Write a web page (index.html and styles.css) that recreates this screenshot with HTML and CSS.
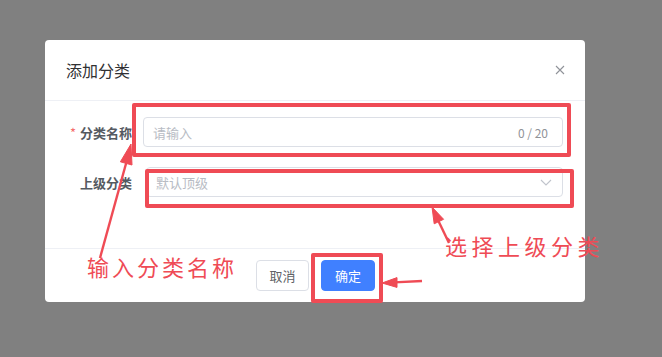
FILE: index.html
```html
<!DOCTYPE html>
<html lang="zh-CN">
<head>
    <meta charset="UTF-8">
    <title>添加分类</title>
    <link rel="stylesheet" href="styles.css">
</head>
<body>
    <div class="dialog">
        <div class="dialog-header">
            <span class="dialog-title">添加分类</span>
            <svg class="dialog-close" width="10" height="10" viewBox="0 0 10 10">
                <path d="M1 1L9 9M9 1L1 9" stroke="#909399" stroke-width="1.1" fill="none"/>
            </svg>
        </div>
        <div class="dialog-body">
            <div class="form-item">
                <label class="form-label"><span class="required">*</span>分类名称</label>
                <div class="input">
                    <span class="placeholder">请输入</span>
                    <span class="count">0 / 20</span>
                </div>
            </div>
            <div class="form-item">
                <label class="form-label">上级分类</label>
                <div class="input select">
                    <span class="placeholder">默认顶级</span>
                    <svg width="12" height="7" viewBox="0 0 12 7">
                        <path d="M1 1L6 6L11 1" stroke="#c0c4cc" stroke-width="1.1" fill="none"/>
                    </svg>
                </div>
            </div>
        </div>
        <div class="dialog-footer">
            <button class="btn">取消</button>
            <button class="btn btn-primary">确定</button>
        </div>
    </div>

    <!-- annotations drawn over the screenshot -->
    <div class="mark mark-name"></div>
    <div class="mark mark-parent"></div>
    <div class="mark mark-ok"></div>
    <div class="note note-name">输入分类名称</div>
    <div class="note note-parent">选择上级分类</div>
    <svg class="arrows" width="662" height="357" viewBox="0 0 662 357">
        <g fill="#ef4b55" stroke="#ef4b55">
            <line x1="100" y1="258" x2="127" y2="160" stroke-width="2.4"/>
            <polygon points="131,144 132,165 120.4,161.8" stroke-width="1"/>
            <line x1="449" y1="243" x2="437" y2="218" stroke-width="2.4"/>
            <polygon points="432,207 443.6,219.3 434.2,223.8" stroke-width="1"/>
            <line x1="422" y1="281" x2="394" y2="282.4" stroke-width="2.4"/>
            <polygon points="382,283 397,277.6 397,287.4" stroke-width="1"/>
        </g>
    </svg>
</body>
</html>
```

FILE: styles.css
```css
body {
    margin: 0;
    padding: 40px 0 0 45px;
    background: #808080;
    font-family: "Noto Sans CJK SC", "Noto Sans", sans-serif;
    width: 662px;
    height: 357px;
    box-sizing: border-box;
    overflow: hidden;
    position: relative;
}
.dialog {
    width: 540px;
    height: 262px;
    background: #fff;
    border-radius: 4px;
    display: flex;
    flex-direction: column;
}
.dialog-header {
    height: 60px;
    padding: 0 20px 0 21px;
    display: flex;
    align-items: center;
    justify-content: space-between;
    border-bottom: 1px solid #eef0f5;
}
.dialog-title {
    font-size: 16px;
    color: #303133;
}
.dialog-body {
    height: 148px;
    padding: 16px 22px 0 20px;
    box-sizing: border-box;
    border-bottom: 1px solid #eef0f5;
}
.form-item {
    display: flex;
    align-items: center;
    margin-bottom: 20px;
}
.form-label {
    width: 78px;
    padding-right: 11px;
    box-sizing: border-box;
    text-align: right;
    font-size: 13px;
    font-weight: bold;
    color: #555a61;
}
.required {
    color: #f56c6c;
    margin-right: 4px;
    font-weight: normal;
}
.input {
    flex: 1;
    height: 30px;
    border: 1px solid #dcdfe6;
    border-radius: 4px;
    box-sizing: border-box;
    display: flex;
    align-items: center;
    justify-content: space-between;
    padding: 0 14px 0 9px;
    font-size: 13px;
}
.select {
    margin-left: 3px;
    padding-right: 10px;
}
.placeholder {
    color: #b8bcc4;
}
.count {
    font-size: 12px;
    color: #909399;
}
.dialog-footer {
    flex: 1;
    display: flex;
    justify-content: center;
    gap: 12px;
    padding-top: 11px;
    padding-left: 1px;
}
.btn {
    height: 31px;
    width: 53px;
    border: 1px solid #dcdfe6;
    border-radius: 4px;
    background: #fff;
    color: #606266;
    font-family: inherit;
    font-size: 13px;
    padding: 0;
}
.btn-primary {
    width: 54px;
    background: #4080ff;
    border-color: #4080ff;
    color: #fff;
}
.mark {
    position: absolute;
    border: 4px solid #ef4b55;
    border-radius: 2px;
    box-sizing: border-box;
}
.mark-name {
    left: 132px;
    top: 103px;
    width: 439px;
    height: 54px;
}
.mark-parent {
    left: 145px;
    top: 169px;
    width: 429px;
    height: 39px;
}
.mark-ok {
    left: 311px;
    top: 253px;
    width: 72px;
    height: 50px;
}
.note {
    position: absolute;
    font-size: 22px;
    letter-spacing: 3px;
    color: #ef4b55;
    line-height: 26px;
    white-space: nowrap;
}
.note-name {
    left: 87px;
    top: 253px;
}
.note-parent {
    left: 445px;
    top: 232px;
    letter-spacing: 4.5px;
}
.arrows {
    position: absolute;
    left: 0;
    top: 0;
}
```
